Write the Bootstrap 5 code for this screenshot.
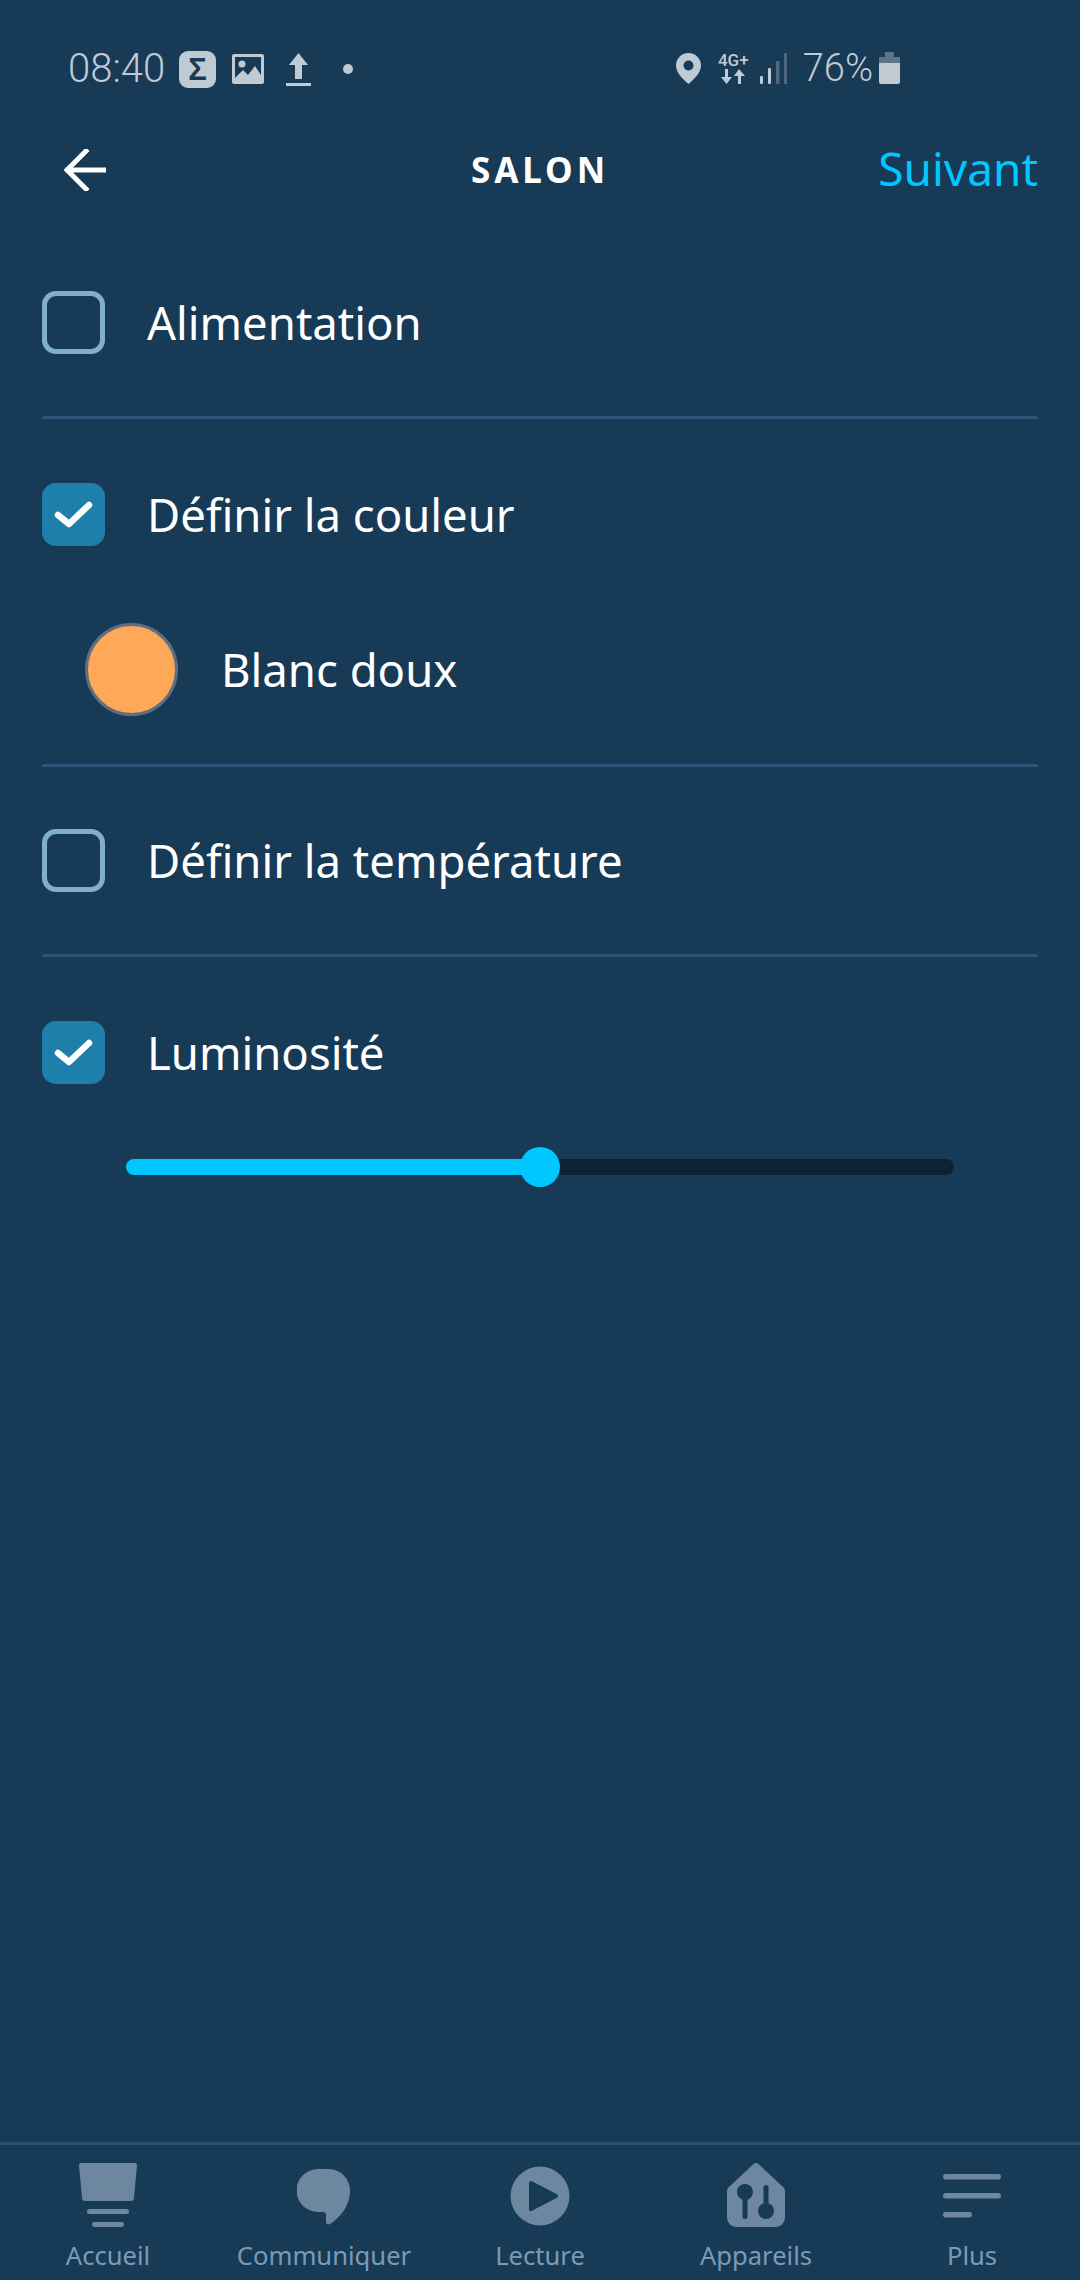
<!DOCTYPE html>
<html lang="fr">
<head>
  <meta charset="UTF-8" />
  <meta name="viewport" content="width=device-width, initial-scale=1.0" />
  <title>Salon</title>
  <link href="https://cdn.jsdelivr.net/npm/bootstrap@5.3.3/dist/css/bootstrap.min.css" rel="stylesheet" />
  <style>
    :root {
      --page-bg: #173a56;
      --status: #c0cad3;
      --accent: #00c7ff;
      --nav-icon: #6c879f;
      --nav-text: #7d9ab5;
    }

    body {
      background-color: var(--page-bg);
      color: #fff;
      font-family: "Noto Sans", "Open Sans", sans-serif;
    }

    .screen {
      width: 1080px;
      height: 2280px;
    }

    /* status bar */
    .status-bar {
      height: 112px;
      padding: 49px 180px 0 68px;
      color: var(--status);
      font-family: Roboto, sans-serif;
      font-weight: 300;
      font-size: 38px;
      line-height: 1;
    }

    .status-time {
      font-size: 40px;
      margin-right: 14px;
    }

    .sigma-box {
      width: 37px;
      height: 37px;
      border-radius: 9px;
      background-color: var(--status);
      color: var(--page-bg);
      font: 700 31px/37px "Liberation Sans", sans-serif;
      text-align: center;
    }

    .net-type {
      font: 500 17px/1 Roboto, sans-serif;
      width: 31px;
    }

    /* header */
    .top-bar {
      height: 115px;
      padding: 0 42px 0 64px;
    }

    .top-title {
      font-size: 35px;
      font-weight: 700;
      letter-spacing: 3.9px;
    }

    .top-next {
      color: var(--accent);
      font-size: 46px;
      line-height: 1;
      padding-bottom: 4px;
      text-decoration: none;
    }

    /* option list */
    .option-list {
      padding: 0 42px;
    }

    .option-group {
      padding: 64px 0 62px;
      border-bottom: 3px solid #2a5478;
    }

    .option-group.tight-top {
      padding-top: 62px;
    }

    .option-group.last-group {
      border-bottom: 0;
      padding-bottom: 0;
    }

    .option-row {
      min-height: 63px;
      margin: 0;
      padding: 0;
      gap: 42px;
    }

    .option-row .form-check-input {
      float: none;
      flex: none;
      width: 63px;
      height: 63px;
      margin: 0;
      background-color: transparent;
      border: 5px solid #7fb0c8;
      border-radius: 14px;
      box-shadow: none;
    }

    .option-row .form-check-input:checked {
      background-color: #1f7fab;
      border-color: #1f7fab;
      background-origin: border-box;
      background-size: 63px;
      background-image: url("data:image/svg+xml,%3csvg xmlns='http://www.w3.org/2000/svg' viewBox='0 0 63 63'%3e%3cpath d='M16 32l11 9 20-19' fill='none' stroke='%23fff' stroke-width='6.500' stroke-linecap='round' stroke-linejoin='round'/%3e%3c/svg%3e");
    }

    .option-row .form-check-label {
      font-size: 45.5px;
      line-height: 63px;
      opacity: 1;
    }

    .color-row {
      margin-top: 77px;
      margin-bottom: -14px;
      padding-left: 43px;
      gap: 43px;
      font-size: 45.5px;
    }

    .color-dot {
      width: 93px;
      height: 93px;
      border-radius: 50%;
      background-color: #ffa858;
      border: 3px solid #5d6f80;
    }

    /* slider */
    .level-range {
      display: block;
      width: 828px;
      height: 40px;
      margin: 63px 0 0 84px;
      background: transparent;
    }

    .level-range::-webkit-slider-runnable-track {
      height: 16px;
      border-radius: 8px;
      background: linear-gradient(to right, var(--accent) 50%, #0e2236 50%);
    }

    .level-range::-webkit-slider-thumb {
      width: 40px;
      height: 40px;
      margin-top: -12px;
      border-radius: 50%;
      background-color: var(--accent);
      box-shadow: none;
    }

    /* bottom nav */
    .tab-bar {
      height: 138px;
      border-top: 3px solid #2c4f6c;
    }

    .tab-item {
      width: 216px;
      color: var(--nav-text);
      font-size: 25.6px;
      line-height: 1;
      text-decoration: none;
    }

    .tab-icon {
      height: 64px;
      margin-top: 18px;
      margin-bottom: 16px;
      color: var(--nav-icon);
    }
  </style>
</head>
<body>
  <div class="screen d-flex flex-column">

    <!-- Status bar -->
    <div class="status-bar d-flex justify-content-between align-items-start">
      <div class="d-flex align-items-center">
        <span class="status-time">08:40</span>
        <span class="sigma-box">Σ</span>
        <svg class="ms-3" width="32" height="30" viewBox="0 0 32 30" fill="currentColor"><path fill-rule="evenodd" d="M2 0h28a2 2 0 0 1 2 2v26a2 2 0 0 1-2 2H2a2 2 0 0 1-2-2V2a2 2 0 0 1 2-2zm1 3v21l8-8 5 5 7-9 6 9V3z"/><circle cx="10" cy="10" r="3.500"/></svg>
        <svg style="margin-left:22px" width="25" height="33" viewBox="0 0 25 33" fill="currentColor"><path d="M12.500 0L22 12h-6v14H9V12H3z"/><rect y="30" width="25" height="3"/></svg>
        <svg style="margin-left:32px" width="10" height="10" viewBox="0 0 10 10" fill="currentColor"><circle cx="5" cy="5" r="5"/></svg>
      </div>
      <div class="d-flex align-items-center">
        <svg width="25" height="31" viewBox="0 0 25 31" fill="currentColor"><path fill-rule="evenodd" d="M12.500 0C19.500 0 25 5.500 25 12.500c0 7-6 13-12.500 18.500C6 25.500 0 19.500 0 12.500 0 5.500 5.500 0 12.500 0zm0 7.500a5 5 0 1 0 0 10 5 5 0 0 0 0-10z"/></svg>
        <div class="net-type d-flex flex-column align-items-center" style="margin-left:17px">
          <span>4G+</span>
          <svg width="24" height="15" viewBox="0 0 24 15" fill="currentColor"><path d="M4 0h3v8h4l-5.500 7L0 8h4zM18 0l6 7h-4v8h-3V7h-4z"/></svg>
        </div>
        <svg style="margin-left:11px" width="27" height="31" viewBox="0 0 27 31"><rect y="23" width="3" height="8" rx="1" fill="#c0cad3"/><rect x="8" y="15" width="3" height="16" rx="1" fill="#c0cad3"/><rect x="16" y="8" width="3.500" height="23" fill="#4d6880"/><rect x="24" y="0" width="3" height="31" fill="#4d6880"/></svg>
        <span style="margin-left:16px">76%</span>
        <svg style="margin-left:6px" width="21" height="32" viewBox="0 0 21 32"><path d="M6 0h9v5h6v8H0V5h6z" fill="#5d7489"/><path d="M0 11h21v19a2 2 0 0 1-2 2H2a2 2 0 0 1-2-2z" fill="#c0cad3"/></svg>
      </div>
    </div>

    <!-- Header -->
    <div class="top-bar position-relative d-flex justify-content-between align-items-center">
      <svg width="42" height="42" viewBox="0 0 42 42" fill="none" stroke="#fff" stroke-width="5" stroke-linecap="square"><path d="M41 21H4M22 2L3 21l19 19"/></svg>
      <span class="top-title position-absolute top-50 start-50 translate-middle">SALON</span>
      <a class="top-next" href="#">Suivant</a>
    </div>

    <!-- Options -->
    <div class="option-list flex-grow-1">
      <div class="option-group">
        <div class="form-check option-row d-flex align-items-center">
          <input class="form-check-input" type="checkbox" id="optPower" />
          <label class="form-check-label" for="optPower">Alimentation</label>
        </div>
      </div>
      <div class="option-group">
        <div class="form-check option-row d-flex align-items-center">
          <input class="form-check-input" type="checkbox" id="optColor" checked />
          <label class="form-check-label" for="optColor">Définir la couleur</label>
        </div>
        <div class="color-row d-flex align-items-center">
          <span class="color-dot"></span>
          <span>Blanc doux</span>
        </div>
      </div>
      <div class="option-group tight-top">
        <div class="form-check option-row d-flex align-items-center">
          <input class="form-check-input" type="checkbox" id="optTemp" />
          <label class="form-check-label" for="optTemp">Définir la température</label>
        </div>
      </div>
      <div class="option-group last-group">
        <div class="form-check option-row d-flex align-items-center">
          <input class="form-check-input" type="checkbox" id="optLevel" checked />
          <label class="form-check-label" for="optLevel">Luminosité</label>
        </div>
        <input class="form-range level-range" type="range" min="0" max="100" value="50" />
      </div>
    </div>

    <!-- Bottom nav -->
    <nav class="tab-bar d-flex">
      <a class="tab-item d-flex flex-column align-items-center" href="#">
        <svg class="tab-icon" width="58" height="64" viewBox="0 0 58 64" fill="currentColor"><path d="M2 0h54a2 2 0 0 1 2 2l-3 33a3 3 0 0 1-3 3H6a3 3 0 0 1-3-3L0 2a2 2 0 0 1 2-2z"/><rect x="8" y="46" width="42" height="5" rx="2.500"/><rect x="13" y="59" width="32" height="5" rx="2.500"/></svg>
        <span>Accueil</span>
      </a>
      <a class="tab-item d-flex flex-column align-items-center" href="#">
        <svg class="tab-icon" width="54" height="64" viewBox="0 0 54 64" fill="currentColor"><path d="M21 6h11a21.500 21.500 0 0 1 21 22c0 14-9 26-20 33-2 1-4 0-4-2v-7c0-2-1-3-3-3h-5a21.500 21.500 0 0 1 0-43z"/></svg>
        <span>Communiquer</span>
      </a>
      <a class="tab-item d-flex flex-column align-items-center" href="#">
        <svg class="tab-icon" width="60" height="64" viewBox="0 0 60 64"><circle cx="30" cy="33" r="29.500" fill="#6c879f"/><path d="M21 20l25 13-25 13z" fill="#173a56" stroke="#173a56" stroke-width="4" stroke-linejoin="round"/></svg>
        <span>Lecture</span>
      </a>
      <a class="tab-item d-flex flex-column align-items-center" href="#">
        <svg class="tab-icon" width="58" height="64" viewBox="0 0 58 64"><path d="M26.500 1a4 4 0 0 1 5 0L56 24a6 6 0 0 1 2 4v27a9 9 0 0 1-9 9H9a9 9 0 0 1-9-9V28a6 6 0 0 1 2-4z" fill="#6c879f"/><g fill="#173a56"><circle cx="18" cy="29" r="8"/><rect x="15.500" y="30" width="5" height="26" rx="2.500"/><circle cx="39" cy="48" r="8"/><rect x="36.500" y="22" width="5" height="26" rx="2.500"/></g></svg>
        <span>Appareils</span>
      </a>
      <a class="tab-item d-flex flex-column align-items-center" href="#">
        <svg class="tab-icon" width="58" height="64" viewBox="0 0 58 64" fill="currentColor"><rect y="11" width="58" height="5.500" rx="2.700"/><rect y="30" width="58" height="5.500" rx="2.700"/><rect y="49" width="29" height="5.500" rx="2.700"/></svg>
        <span>Plus</span>
      </a>
    </nav>
  </div>

  <script src="https://cdn.jsdelivr.net/npm/bootstrap@5.3.3/dist/js/bootstrap.bundle.min.js"></script>
</body>
</html>
